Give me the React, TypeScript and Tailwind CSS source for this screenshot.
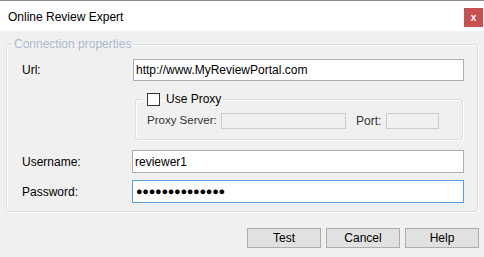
import React from 'react';

const font = { fontFamily: '"Liberation Sans", Arial, sans-serif' };

const App = () => {
  return (
    <div
      className="w-[484px] h-[257px] bg-[#f0f0f0] flex flex-col overflow-hidden text-[12px] text-black border-t border-[#8c8c8c]"
      style={font}
    >
      {/* Title bar */}
      <div className="h-[30px] bg-white flex items-start justify-between">
        <span className="pl-[8px] pt-[9px] text-[12px] leading-[14px]">Online Review Expert</span>
        <div className="mt-[7px] mr-[1px] w-[19px] h-[19px] bg-[#c75050] flex items-center justify-center text-white font-bold text-[10px] leading-none">
          x
        </div>
      </div>

      {/* Connection properties group */}
      <fieldset className="mt-[5px] mx-[6px] h-[176px] border border-[#d5dfe5] rounded-[3px] shadow-[inset_1px_1px_0_#ffffff,1px_1px_0_#ffffff]">
        <legend className="ml-[5px] px-[2px] text-[#a9b8d2] text-[12px] leading-[16px]">Connection properties</legend>

        <div className="flex items-center mt-[7px] ml-[15px]">
          <span className="w-[111px]">Url:</span>
          <input
            readOnly
            defaultValue="http://www.MyReviewPortal.com"
            className="w-[331px] h-[22px] bg-white border border-[#acacac] px-[2px] outline-none"
            style={font}
          />
        </div>

        {/* Proxy group */}
        <fieldset className="mt-[10px] ml-[128px] w-[328px] h-[49px] border border-[#d5dfe5] rounded-[3px] shadow-[inset_1px_1px_0_#ffffff,1px_1px_0_#ffffff]">
          <legend className="ml-[9px] px-[2px] flex items-center gap-[6px] leading-[16px]">
            <span className="w-[13px] h-[13px] bg-white border border-[#333333] inline-block" />
            <span>Use Proxy</span>
          </legend>
          <div className="flex items-center mt-[5px] ml-[11px]">
            <span className="w-[74px] text-[#333] text-[11.5px]">Proxy Server:</span>
            <div className="w-[125px] h-[16px] bg-[#f0f0f0] border border-[#cccccc]" />
            <span className="ml-[10px] w-[30px] text-[#333]">Port:</span>
            <div className="w-[53px] h-[16px] bg-[#f0f0f0] border border-[#cccccc]" />
          </div>
        </fieldset>

        <div className="flex items-center mt-[10px] ml-[15px]">
          <span className="w-[110px]">Username:</span>
          <input
            readOnly
            defaultValue="reviewer1"
            className="w-[332px] h-[23px] bg-white border border-[#acacac] px-[2px] outline-none"
            style={font}
          />
        </div>
        <div className="flex items-center mt-[7px] ml-[15px]">
          <span className="w-[110px]">Password:</span>
          <div className="w-[332px] h-[23px] bg-white border border-[#569de5] px-[3px] flex items-center text-[11px] tracking-[-0.3px] leading-none">
            ●●●●●●●●●●●●●●
          </div>
        </div>
      </fieldset>

      {/* Buttons */}
      <div className="flex justify-end gap-[5px] mt-[16px] mr-[5px]">
        {['Test', 'Cancel', 'Help'].map((b) => (
          <button
            key={b}
            className="w-[74px] h-[20px] bg-[#e1e1e1] border border-[#adadad] text-[12px] leading-none"
            style={font}
          >
            {b}
          </button>
        ))}
      </div>
    </div>
  );
};

export default App;
